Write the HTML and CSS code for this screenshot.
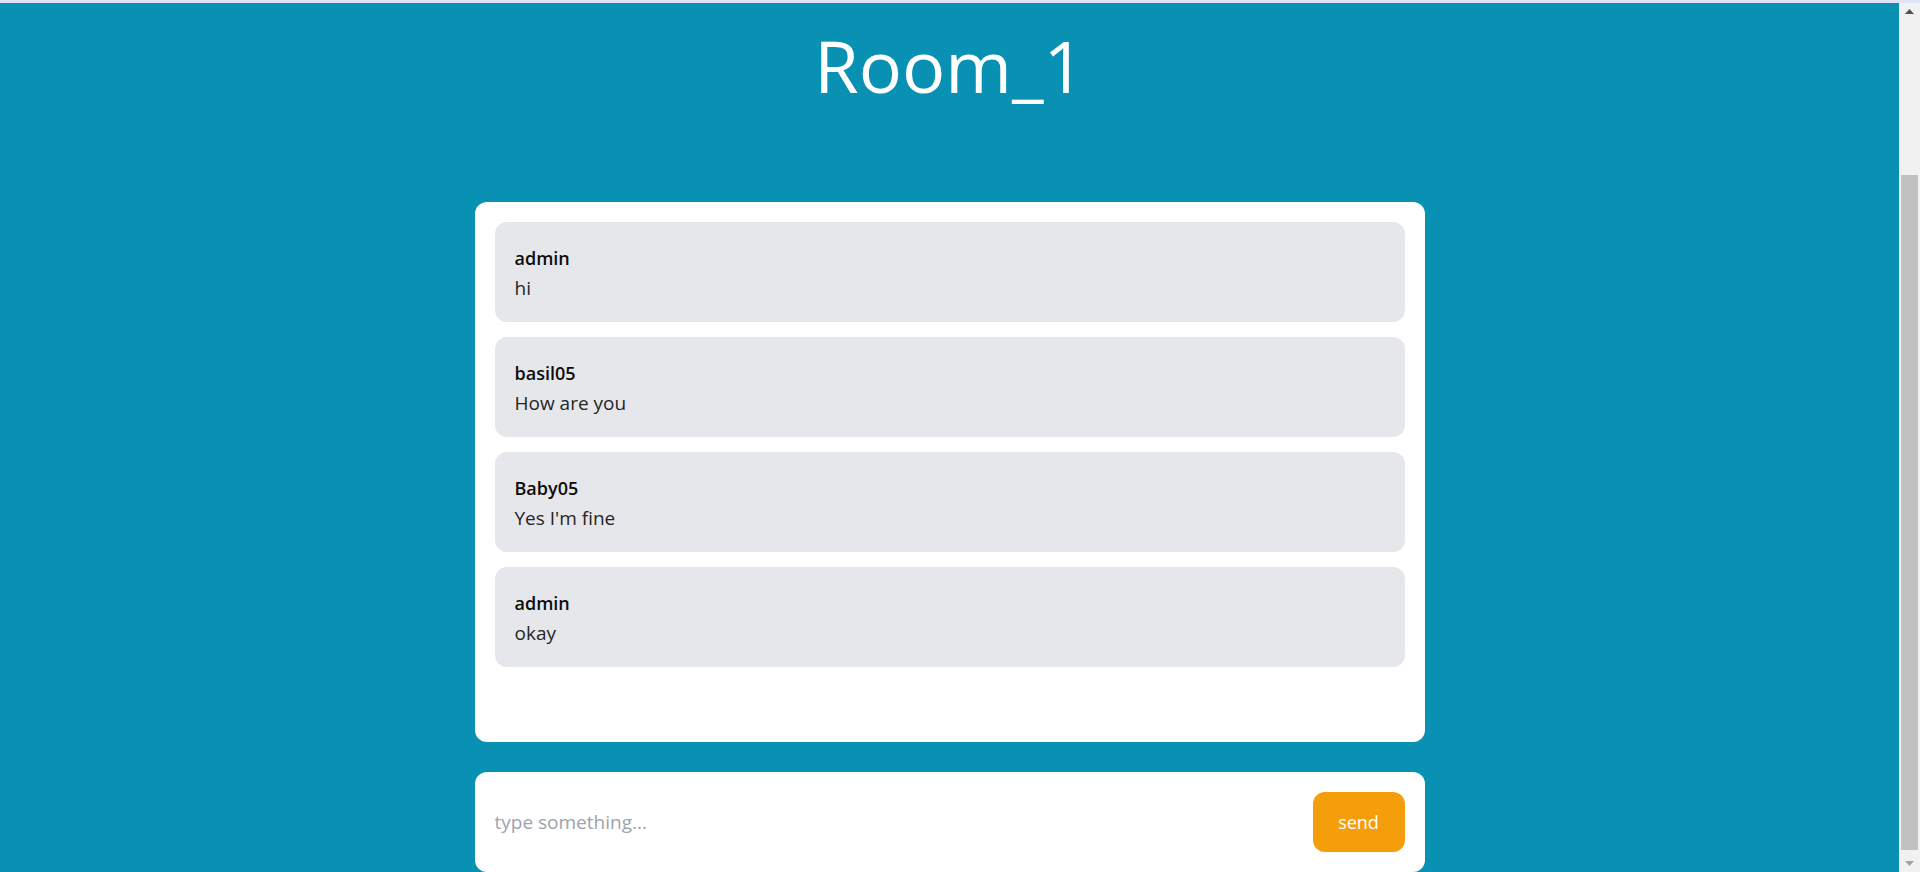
FILE: index.html
```html
<!DOCTYPE html>
<html lang="en">
<head>
<meta charset="utf-8">
<title>Room_1</title>
<link rel="stylesheet" href="styles.css">
</head>
<body>
<div class="topline"></div>
<div class="window">
  <main class="page">
    <header class="header">
      <h1 class="title">Room_1</h1>
    </header>
    <section class="chat">
      <div class="msg">
        <div class="msg-name">admin</div>
        <div class="msg-text">hi</div>
      </div>
      <div class="msg">
        <div class="msg-name">basil05</div>
        <div class="msg-text">How are you</div>
      </div>
      <div class="msg">
        <div class="msg-name">Baby05</div>
        <div class="msg-text">Yes I'm fine</div>
      </div>
      <div class="msg">
        <div class="msg-name">admin</div>
        <div class="msg-text">okay</div>
      </div>
    </section>
    <form class="composer">
      <input class="composer-input" type="text" placeholder="type something...">
      <button class="send-btn" type="button">send</button>
    </form>
  </main>
  <div class="scrollbar">
    <div class="sb-arrow">
      <svg width="9" height="5" viewBox="0 0 9 5"><polygon points="0,5 4.5,0 9,5" fill="#505050"/></svg>
    </div>
    <div class="sb-track">
      <div class="sb-thumb"></div>
    </div>
    <div class="sb-arrow">
      <svg width="9" height="5" viewBox="0 0 9 5"><polygon points="0,0 9,0 4.5,5" fill="#a3a3a3"/></svg>
    </div>
  </div>
</div>
</body>
</html>
```
FILE: styles.css
```css
html, body {
  margin: 0;
  padding: 0;
  height: 872px;
  overflow: hidden;
}
body {
  display: flex;
  flex-direction: column;
  font-family: "Open Sans", "Noto Sans", sans-serif;
  background: #0891b2;
}
.topline {
  height: 3px;
  background: #dee3f8;
  flex: none;
}
.window {
  flex: 1;
  display: flex;
  min-height: 0;
}
.page {
  flex: 1;
  display: flex;
  flex-direction: column;
  align-items: center;
  background: #0891b2;
  min-width: 0;
}
.header {
  height: 199px;
  flex: none;
}
.title {
  margin: 0;
  padding-top: 26px;
  font-size: 72px;
  line-height: 72px;
  font-weight: 400;
  color: #ffffff;
  text-align: center;
}
.chat {
  width: 950px;
  height: 540px;
  box-sizing: border-box;
  padding: 20px;
  background: #ffffff;
  border-radius: 12px;
  display: flex;
  flex-direction: column;
  gap: 15px;
  flex: none;
}
.msg {
  background: #e5e7eb;
  border-radius: 12px;
  padding: 22px 20px 20px;
  font-size: 19px;
  line-height: 28px;
}
.msg-name {
  font-size: 18px;
  font-weight: 600;
  color: #0d0d0d;
}
.msg-text {
  margin-top: 2px;
  color: #262626;
}
.composer {
  margin: 30px 0 0;
  width: 950px;
  height: 100px;
  box-sizing: border-box;
  padding: 20px;
  background: #ffffff;
  border-radius: 12px;
  display: flex;
  align-items: center;
  gap: 20px;
  flex: none;
}
.composer-input {
  flex: 1;
  border: none;
  outline: none;
  padding: 0;
  font-family: inherit;
  font-size: 19px;
  color: #111;
  background: transparent;
}
.composer-input::placeholder {
  color: #9ca3af;
}
.send-btn {
  width: 92px;
  height: 60px;
  border: none;
  border-radius: 12px;
  background: #f59e0b;
  color: #ffffff;
  font-family: inherit;
  font-size: 18px;
}
.scrollbar {
  width: 21px;
  flex: none;
  background: #f1f1f1;
  display: flex;
  flex-direction: column;
  align-items: center;
}
.sb-arrow {
  height: 17px;
  width: 17px;
  display: flex;
  align-items: center;
  justify-content: center;
  flex: none;
}
.sb-track {
  flex: 1;
  width: 17px;
  padding-top: 155px;
  box-sizing: border-box;
}
.sb-thumb {
  height: 675px;
  background: #c1c1c1;
}
```
